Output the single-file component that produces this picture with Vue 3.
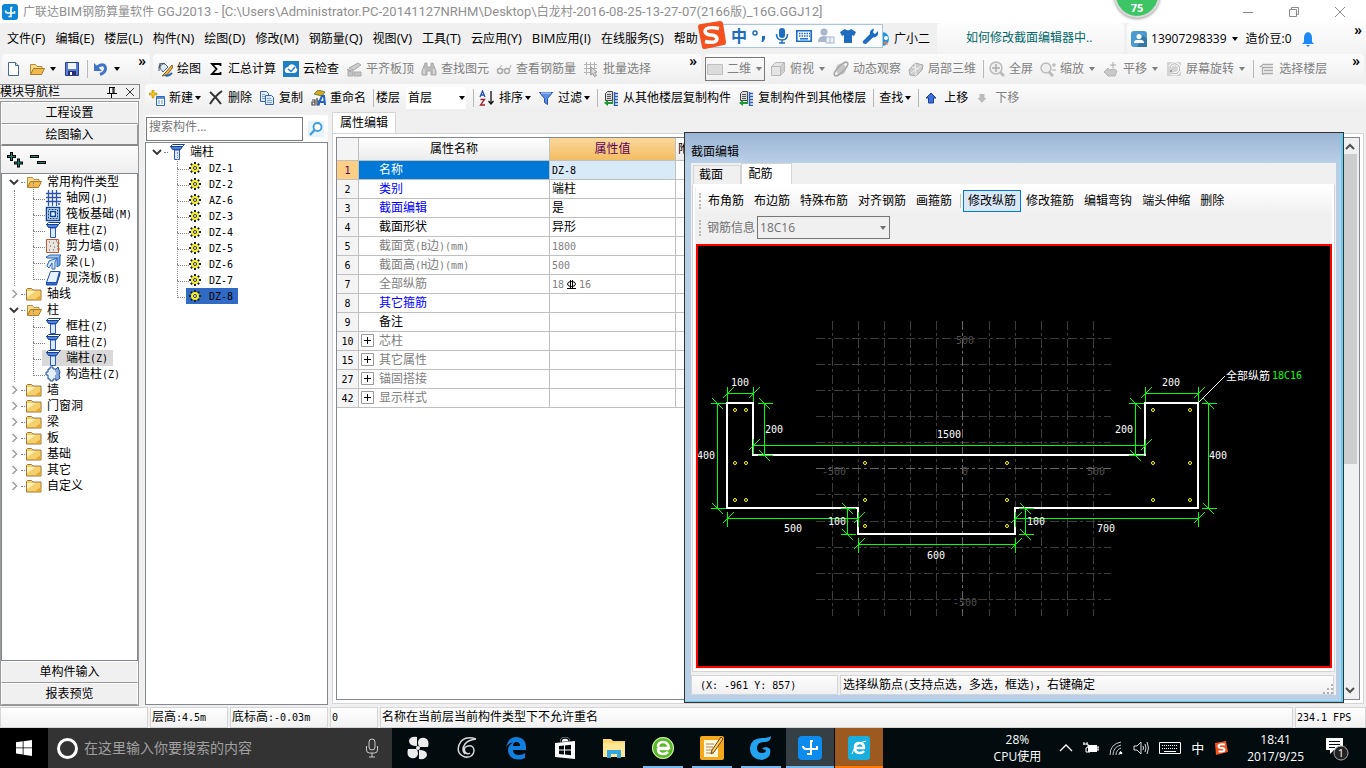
<template>
  <div class="app">
    <header class="titlebar">
      <svg class="icon" viewBox="0 0 16 16" v-html="icons.logo" />
      <h1 class="titlebar__text"><Mixed text="广联达BIM钢筋算量软件 GGJ2013 - [C:\Users\Administrator.PC-20141127NRHM\Desktop\白龙村-2016-08-25-13-27-07(2166版)_16G.GGJ12]" /></h1>
      <div class="titlebar__controls">
        <button v-for="c in ['minimize', 'restore', 'close']" :key="c" type="button" :aria-label="c">
          <svg viewBox="0 0 12 12" v-html="icons[c]" />
        </button>
      </div>
    </header>

    <nav class="menubar">
      <div class="menubar__items">
        <button v-for="m in menus" :key="m" type="button"><Mixed :text="m" /></button>
      </div>
      <button class="menubar__bird" type="button">
        <svg class="icon" viewBox="0 0 16 16" v-html="icons.bird" />广小二
      </button>
      <a class="menubar__tip" href="#">如何修改截面编辑器中..</a>
      <div class="menubar__account">
        <svg class="icon" viewBox="0 0 16 16" v-html="icons.user" />
        <button type="button">13907298339<i class="caret caret--split" /></button>
        <span class="menubar__beans">造价豆:0</span>
        <svg class="icon" viewBox="0 0 16 16" v-html="icons.bell" />
        <span class="more">»</span>
      </div>
    </nav>

    <div class="toolbars">
      <div v-for="(group, g) in topGroups" :key="g" class="toolbar" :class="'toolbar--g' + g">
        <template v-for="(b, i) in group" :key="i">
          <span v-if="b.sep" class="sep" />
          <button
            v-else
            type="button"
            class="tool"
            :class="{ 'tool--boxed': b.boxed }"
            :disabled="b.off"
            :aria-label="b.text || b.icon"
          >
            <svg class="icon" viewBox="0 0 16 16" v-html="icons[b.icon]" />
            <span v-if="b.text">{{ b.text }}</span>
            <i v-if="b.caret" class="caret caret--split" />
          </button>
        </template>
        <span class="more">»</span>
      </div>
    </div>

    <main class="workspace">
      <aside class="modules">
        <div class="modules__head">
          <span>模块导航栏</span>
          <svg class="modules__pin" viewBox="0 0 12 12" v-html="icons.pin" />
          <svg class="modules__pin" viewBox="0 0 12 12" v-html="icons.cross" />
        </div>
        <div class="modules__frame">
          <button class="bar-button" type="button">工程设置</button>
          <button class="bar-button bar-button--on" type="button">绘图输入</button>
          <div class="modules__tools">
            <svg viewBox="0 0 16 16" v-html="icons.expand" />
            <svg viewBox="0 0 16 16" v-html="icons.collapse" />
          </div>
          <ul class="tree modules__tree">
            <li v-for="node in moduleTree" :key="node.text">
              <div class="tree__row">
                <svg class="tree__chevron" viewBox="0 0 10 10" v-html="node.children ? icons.down : icons.right" />
                <i class="tree__dash" />
                <svg class="icon" viewBox="0 0 16 16" v-html="node.children ? icons.folderOpen : icons.folder" />
                <Mixed class="tree__label" :text="node.text" />
              </div>
              <ul v-if="node.children" class="tree__leaves">
                <li v-for="leaf in node.children" :key="leaf.text" class="tree__leaf">
                  <div class="tree__item" :class="{ 'tree__item--on': leaf.on }">
                    <svg class="icon" viewBox="0 0 16 16" v-html="icons[leaf.icon]" />
                    <Mixed :text="leaf.text" />
                  </div>
                </li>
              </ul>
            </li>
          </ul>
          <button class="bar-button" type="button">单构件输入</button>
          <button class="bar-button" type="button">报表预览</button>
        </div>
      </aside>

      <section class="content">
        <div class="toolbar toolbar--edit">
          <template v-for="(b, i) in editTools" :key="i">
            <span v-if="b.sep" class="sep" />
            <div v-else-if="b.floor" class="floor">
              <label for="floor">楼层</label>
              <div class="floor__box">
                <select id="floor"><option>首层</option></select>
                <i class="caret" />
              </div>
            </div>
            <button v-else type="button" class="tool" :disabled="b.off">
              <svg v-if="b.icon" class="icon" viewBox="0 0 16 16" v-html="icons[b.icon]" />
              <span>{{ b.text }}</span>
              <i v-if="b.caret" class="caret" />
            </button>
          </template>
        </div>

        <div class="panes">
          <section class="members">
            <div class="members__search">
              <input type="text" placeholder="搜索构件..." aria-label="搜索构件" />
              <button type="button" aria-label="搜索">
                <svg class="icon" viewBox="0 0 16 16" v-html="icons.search" />
              </button>
            </div>
            <div class="tree members__tree">
              <div class="tree__row">
                <svg class="tree__chevron" viewBox="0 0 10 10" v-html="icons.down" />
                <i class="tree__dash" />
                <svg class="icon" viewBox="0 0 16 16" v-html="icons.column" />
                <span class="tree__label">端柱</span>
              </div>
              <ul class="tree__leaves">
                <li v-for="m in members" :key="m" class="tree__leaf">
                  <div class="tree__item" :class="{ 'tree__item--picked': m === 'DZ-8' }">
                    <svg class="gear" viewBox="0 0 12 12" v-html="icons.gear" />
                    <Mixed :text="m" />
                  </div>
                </li>
              </ul>
            </div>
          </section>

          <section class="props">
            <button class="props__tab" type="button">属性编辑</button>
            <div class="props__page">
              <div class="props__frame">
                <table class="grid">
                  <thead>
                    <tr>
                      <th class="grid__no"></th>
                      <th class="grid__name">属性名称</th>
                      <th class="grid__value grid__value--hot">属性值</th>
                      <th class="grid__extra">附</th>
                    </tr>
                  </thead>
                  <tbody>
                    <tr v-for="row in rows" :key="row.no" :class="'is-' + row.tone">
                      <td class="grid__no"><Mixed :text="row.no" /></td>
                      <td class="grid__name">
                        <svg v-if="row.group" class="plus" viewBox="0 0 13 13" v-html="icons.plusBox" />
                        <Mixed :text="row.name" />
                      </td>
                      <td class="grid__value">
                        <template v-if="row.rebar">
                          <Mixed text="18" /><svg class="rebar" viewBox="0 0 11 11" v-html="icons.rebar" /><Mixed text="16" />
                        </template>
                        <Mixed v-else :text="row.value" />
                      </td>
                      <td></td>
                    </tr>
                  </tbody>
                </table>
                <div class="scroll">
                  <svg viewBox="0 0 14 14"><path d="M3 9l4-4 4 4" fill="none" stroke="#505050" stroke-width="2" /></svg>
                  <i class="scroll__thumb" />
                  <svg viewBox="0 0 14 14"><path d="M3 5l4 4 4-4" fill="none" stroke="#505050" stroke-width="2" /></svg>
                </div>
              </div>
            </div>

            <div class="dialog" role="dialog" aria-labelledby="dialog-title">
              <h2 id="dialog-title" class="dialog__title">截面编辑</h2>
              <div class="dialog__body">
                <div class="dialog__tabs">
                  <button type="button">截面</button>
                  <button type="button" class="on">配筋</button>
                </div>
                <div class="dialog__page">
                  <div class="dialog__tools">
                    <i class="grip" />
                    <template v-for="t in sectionTools" :key="t">
                      <span v-if="t === '|'" class="dialog__sep" />
                      <button v-else type="button" :class="{ on: t === '修改纵筋' }">{{ t }}</button>
                    </template>
                  </div>
                  <div class="dialog__info">
                    <i class="grip" />
                    <label for="rebar-info">钢筋信息</label>
                    <div class="dialog__select">
                      <select id="rebar-info" disabled><option>18C16</option></select>
                      <i class="caret" />
                    </div>
                  </div>
                  <div class="canvas">
                    <svg
                      class="canvas__drawing"
                      viewBox="698 246 632 420"
                      preserveAspectRatio="xMinYMin meet"
                      shape-rendering="crispEdges"
                    >
                      <g stroke="#3c3c3c" stroke-dasharray="9 3 3 3">
                        <path v-for="x in gridX" :key="'x' + x" :d="`M${x}.5 321V616`" />
                        <path v-for="y in gridY" :key="'y' + y" :d="`M816 ${y}.5H1111`" />
                      </g>
                      <path class="axis" d="M962.5 321V616M816 468.5H1111" />
                      <text
                        v-for="l in axisLabels"
                        :key="l.join()"
                        class="num num--dim"
                        :x="l[1]"
                        :y="l[2]"
                      >{{ l[0] }}</text>
                      <path
                        d="M727 403H753V455H1145V403H1198V508H1015V534H858V508H727Z"
                        fill="none"
                        stroke="#fff"
                        stroke-width="2"
                      />
                      <g class="dims">
                        <path v-for="d in dims" :key="d.join()" :d="dimPath(d)" />
                      </g>
                      <text v-for="d in dims" :key="'t' + d.join()" class="num" :x="d[5]" :y="d[6]">{{ d[4] }}</text>
                      <circle
                        v-for="p in bars"
                        :key="p.join()"
                        :cx="p[0]"
                        :cy="p[1]"
                        r="1.5"
                        fill="none"
                        stroke="#ff0"
                        shape-rendering="auto"
                      />
                      <path d="M1199 402l26-26" stroke="#fff" />
                      <text class="note" x="1226" y="380">全部纵筋</text>
                      <text class="num num--green" x="1287" y="379">18C16</text>
                    </svg>
                  </div>
                </div>
                <div class="dialog__status">
                  <div><Mixed text="(X: -961 Y: 857)" /></div>
                  <div>
                    <Mixed text="选择纵筋点(支持点选，多选，框选)，右键确定" />
                    <svg class="sizer" viewBox="0 0 12 12" v-html="icons.sizer" />
                  </div>
                </div>
              </div>
            </div>
          </section>
        </div>
      </section>
    </main>

    <footer class="status">
      <div class="status__blank"></div>
      <div class="status__height"><Mixed text="层高:4.5m" /></div>
      <div class="status__base"><Mixed text="底标高:-0.03m" /></div>
      <div class="status__count"><Mixed text="0" /></div>
      <div class="status__msg">名称在当前层当前构件类型下不允许重名</div>
      <div class="status__fps"><Mixed text="234.1 FPS" /></div>
    </footer>

    <div class="taskbar">
      <button class="taskbar__start" type="button" aria-label="开始">
        <svg viewBox="0 0 16 16" v-html="icons.windows" />
      </button>
      <div class="taskbar__search">
        <i class="taskbar__ring" />
        <input type="text" placeholder="在这里输入你要搜索的内容" aria-label="搜索" />
        <svg viewBox="0 0 16 20" v-html="icons.mic" />
      </div>
      <button
        v-for="a in apps"
        :key="a.icon"
        type="button"
        class="taskbar__app"
        :class="a.state"
        :aria-label="a.icon"
      >
        <svg viewBox="0 0 24 24" v-html="icons[a.icon]" />
      </button>
      <div class="taskbar__cpu"><span>28%</span><span>CPU使用</span></div>
      <div class="taskbar__tray">
        <svg v-for="t in tray" :key="t" viewBox="0 0 16 16" v-html="icons[t]" />
        <svg class="wide" viewBox="0 0 24 16" v-html="icons.keyboard" />
        <span>中</span>
        <svg viewBox="0 0 16 16" v-html="icons.sogou" />
      </div>
      <div class="taskbar__clock"><span>18:41</span><span>2017/9/25</span></div>
      <svg class="taskbar__notice" viewBox="0 0 26 26" v-html="icons.notice" />
    </div>

    <!-- floats above the desktop -->
    <div class="ime">
      <svg class="ime__logo" viewBox="0 0 28 28" v-html="icons.sogouBig" />
      <span>中</span>
      <svg v-for="k in imeKeys" :key="k" viewBox="0 0 18 18" v-html="icons[k]" />
    </div>
    <div class="ball">75</div>
  </div>
</template>

<script setup>
import { h } from 'vue'

// Latin runs get their own font and size, apart from the Chinese ones
const Mixed = (props) =>
  h(
    'span',
    String(props.text)
      .split(/([\x20-\x7e]+)/)
      .filter(Boolean)
      .map((s) => (/^[\x20-\x7e]/.test(s) ? h('span', { class: 'latin' }, s) : s)),
  )
Mixed.props = ['text']

const menus = [
  '文件(F)', '编辑(E)', '楼层(L)', '构件(N)', '绘图(D)', '修改(M)', '钢筋量(Q)',
  '视图(V)', '工具(T)', '云应用(Y)', 'BIM应用(I)', '在线服务(S)', '帮助',
]

const topGroups = [
  [
    { icon: 'file' },
    { icon: 'folderOpen', caret: true },
    { icon: 'save' },
    { sep: true },
    { icon: 'undo', caret: true },
  ],
  [
    { icon: 'draw', text: '绘图' },
    { icon: 'sigma', text: '汇总计算' },
    { icon: 'cloud', text: '云检查' },
    { icon: 'slab', text: '平齐板顶', off: true },
    { icon: 'binocular', text: '查找图元', off: true },
    { icon: 'glasses', text: '查看钢筋量', off: true },
    { icon: 'batch', text: '批量选择', off: true },
  ],
  [
    { icon: 'plane', text: '二维', off: true, caret: true, boxed: true },
    { icon: 'cube', text: '俯视', off: true, caret: true },
    { icon: 'orbit', text: '动态观察', off: true },
    { icon: 'local3d', text: '局部三维', off: true },
    { sep: true },
    { icon: 'full', text: '全屏', off: true },
    { icon: 'zoom', text: '缩放', off: true, caret: true },
    { icon: 'pan', text: '平移', off: true, caret: true },
    { icon: 'rotate', text: '屏幕旋转', off: true, caret: true },
    { sep: true },
    { icon: 'floors', text: '选择楼层', off: true },
  ],
]

const editTools = [
  { icon: 'add', text: '新建', caret: true },
  { icon: 'del', text: '删除' },
  { icon: 'copy', text: '复制' },
  { icon: 'rename', text: '重命名' },
  { sep: true },
  { floor: true },
  { sep: true },
  { icon: 'sort', text: '排序', caret: true },
  { icon: 'filter', text: '过滤', caret: true },
  { sep: true },
  { icon: 'copyFrom', text: '从其他楼层复制构件' },
  { icon: 'copyTo', text: '复制构件到其他楼层' },
  { sep: true },
  { text: '查找', caret: true },
  { sep: true },
  { icon: 'up', text: '上移' },
  { icon: 'downArrow', text: '下移', off: true },
]

const moduleTree = [
  {
    text: '常用构件类型',
    children: [
      { text: '轴网(J)', icon: 'axes' },
      { text: '筏板基础(M)', icon: 'raft' },
      { text: '框柱(Z)', icon: 'column' },
      { text: '剪力墙(Q)', icon: 'wall' },
      { text: '梁(L)', icon: 'beam' },
      { text: '现浇板(B)', icon: 'board' },
    ],
  },
  { text: '轴线' },
  {
    text: '柱',
    children: [
      { text: '框柱(Z)', icon: 'column' },
      { text: '暗柱(Z)', icon: 'column' },
      { text: '端柱(Z)', icon: 'column', on: true },
      { text: '构造柱(Z)', icon: 'tie' },
    ],
  },
  { text: '墙' },
  { text: '门窗洞' },
  { text: '梁' },
  { text: '板' },
  { text: '基础' },
  { text: '其它' },
  { text: '自定义' },
]

const members = ['DZ-1', 'DZ-2', 'AZ-6', 'DZ-3', 'DZ-4', 'DZ-5', 'DZ-6', 'DZ-7', 'DZ-8']

const rows = [
  { no: 1, name: '名称', value: 'DZ-8', tone: 'picked' },
  { no: 2, name: '类别', value: '端柱', tone: 'blue' },
  { no: 3, name: '截面编辑', value: '是', tone: 'blue' },
  { no: 4, name: '截面形状', value: '异形', tone: 'black' },
  { no: 5, name: '截面宽(B边)(mm)', value: '1800', tone: 'gray' },
  { no: 6, name: '截面高(H边)(mm)', value: '500', tone: 'gray' },
  { no: 7, name: '全部纵筋', value: '', rebar: true, tone: 'gray' },
  { no: 8, name: '其它箍筋', value: '', tone: 'blue' },
  { no: 9, name: '备注', value: '', tone: 'black' },
  { no: 10, name: '芯柱', value: '', group: true, tone: 'gray' },
  { no: 15, name: '其它属性', value: '', group: true, tone: 'gray' },
  { no: 27, name: '锚固搭接', value: '', group: true, tone: 'gray' },
  { no: 42, name: '显示样式', value: '', group: true, tone: 'gray' },
]

const sectionTools = [
  '布角筋', '布边筋', '特殊布筋', '对齐钢筋', '画箍筋', '|',
  '修改纵筋', '修改箍筋', '编辑弯钩', '端头伸缩', '删除',
]

const gridX = [832, 858, 884, 910, 936, 989, 1015, 1041, 1067, 1093]
const gridY = [338, 364, 390, 416, 442, 494, 521, 547, 573, 599]
const axisLabels = [
  ['500', 965, 344], ['-500', 834, 475], ['0', 965, 475], ['500', 1096, 475], ['-500', 965, 606],
]

// direction, position of the line, from, to, label, label x, label y
const dims = [
  ['h', 393, 727, 753, '100', 740, 386],
  ['h', 393, 1145, 1198, '200', 1171, 386],
  ['h', 445, 753, 1145, '1500', 949, 438],
  ['h', 518, 727, 858, '500', 793, 532],
  ['h', 518, 1015, 1198, '700', 1106, 532],
  ['h', 544, 858, 1015, '600', 936, 559],
  ['v', 717, 403, 508, '400', 706, 459],
  ['v', 764, 403, 455, '200', 774, 433],
  ['v', 1135, 403, 455, '200', 1124, 433],
  ['v', 1208, 403, 508, '400', 1218, 459],
  ['v', 847, 508, 534, '100', 837, 525],
  ['v', 1025, 508, 534, '100', 1036, 525],
]

function dimPath([dir, at, from, to]) {
  const c = at + 0.5
  return [from, to]
    .map((n) => {
      const e = n + 0.5
      return dir === 'h'
        ? `M${e} ${c - 7}V${c + 8}M${e - 5} ${c + 5}L${e + 6} ${c - 6}`
        : `M${c - 7} ${e}H${c + 8}M${c - 5} ${e - 5}L${c + 6} ${e + 6}`
    })
    .join('') + (dir === 'h' ? `M${from} ${c}H${to}` : `M${c} ${from}V${to}`)
}

const bars = [
  ...[735, 746, 1153, 1190].flatMap((x) => [410, 463, 500].map((y) => [x, y])),
  ...[865, 1007].flatMap((x) => [463, 500, 526].map((y) => [x, y])),
]

const apps = [
  { icon: 'fan' },
  { icon: 'swirl' },
  { icon: 'edge' },
  { icon: 'store' },
  { icon: 'explorer' },
  { icon: 'browser', state: 'running' },
  { icon: 'notes', state: 'running' },
  { icon: 'glodon', state: 'running' },
  { icon: 'ggj', state: 'active' },
  { icon: 'ie', state: 'alert' },
]
const tray = ['chevronUp', 'battery', 'wifi', 'volume']
const imeKeys = ['punct', 'mic2', 'keys', 'person', 'shirt', 'wrench']

const sogouMark =
  '<path d="M2 3l11-2 2 11-12 3z" fill="#f4511e"/><path d="M12 4.500Q6 3.500 5.500 6q0 2 3 2t3 2-6 1.500" fill="none" stroke="#fff" stroke-width="2"/>'

const copyFloor =
  '<path d="M2.500 3.500l2-2h5v9h-7z" fill="#ddd" stroke="#444"/><path d="M4 4.500h4M4 6.500h4M4 8.500h4" stroke="#555"/><path d="M11.500 2v14M11 3.500h4M11 6.500h4M11 9.500h4M11 12.500h4M11 15.500h4" stroke="#2b5cb8" stroke-width="1.400"/><path d="M1 13l4-3v2h4v-2h1v4H5v2z" fill="#1a9a30"/>'

const icons = {
  logo: '<rect width="16" height="16" rx="3" fill="#0d86d8"/><path d="M10.500 3.500H9v9H6.500M3.500 6.500q0 2.500 2.500 2.500h6.500V7" fill="none" stroke="#fff" stroke-width="1.600"/>',
  minimize: '<path d="M1 6.500h10" stroke="#8a8a8a"/>',
  restore: '<path d="M1.500 3.500h7v7h-7zM3.500 3V1.500h7v7H9" fill="none" stroke="#8a8a8a"/>',
  close: '<path d="M1 1l10 10M11 1L1 11" stroke="#8a8a8a"/>',
  bird: '<circle cx="8" cy="8" r="7" fill="#2196e0"/><circle cx="12" cy="7" r="2" fill="#fff"/><path d="M9 12l5 2-2-4z" fill="#e74"/>',
  user: '<rect width="16" height="16" rx="3" fill="#4c9bd0"/><path d="M8 12l4-8 4 4v8H6z" fill="#3479a8"/><circle cx="8" cy="5.500" r="2.500" fill="#fff"/><path d="M3 12q0-3 3-3h4q3 0 3 3z" fill="#fff"/>',
  bell: '<path d="M8 1q4 1 4 6v4l2 2H2l2-2V7q0-5 4-6z" fill="#1e88f5"/><path d="M6 14h4l-2 2z" fill="#1e88f5"/>',
  file: '<path d="M2.500 1.500h7l3 3v10h-10z" fill="#fff" stroke="#4a6a94"/><path d="M9.500 1.500v3h3" fill="#cfe0f4" stroke="#4a6a94"/>',
  folderOpen: '<path d="M1.500 13V3.500h5l1.500 2h5V8" fill="#f9dc8a" stroke="#b58a3a"/><path d="M1.500 13.500L4.500 7.500h11l-3 6z" fill="#f2b84a" stroke="#a87a2c"/>',
  folder: '<path d="M.5 3.500l1-1h4l1.500 1.500h8v10H.500z" fill="#f7d06c" stroke="#9a7a3c"/><path d="M1 5h9L1 11z" fill="#fff0b8"/><path d="M14.500 9v4.500H9z" fill="#eba92c"/>',
  save: '<path d="M1.500 1.500h13v13h-13z" fill="#5b7fd6" stroke="#27408f"/><path d="M4 2h8v6H4z" fill="#f2f4ff"/><path d="M4 10h8v4H4z" fill="#27306f"/><path d="M6 11h2v3H6z" fill="#fff"/>',
  undo: '<path d="M4 6q8-5 8.500 1.500 0 4-5.500 6" fill="none" stroke="#3f74c8" stroke-width="3"/><path d="M1 2v8h8z" fill="#3f74c8"/>',
  draw: '<path d="M2 6l5-4 4 4-5 5z" fill="#dfe7f0" stroke="#4a6280"/><path d="M3 2v5M8 3Q1 0 2 10" fill="none" stroke="#456"/><path d="M15 4l-6 7-4 4 5-1 6-8z" fill="#edb541" stroke="#865f20"/><path d="M8 14q3 2 7-2" stroke="#2c66b8" stroke-width="2" fill="none"/>',
  sigma: '<path d="M12.500 5V3H4l4.500 5L4 13h8.500v-2" fill="none" stroke="#000" stroke-width="1.800"/>',
  cloud: '<rect width="16" height="16" fill="#1e7fc4"/><path d="M4 12q-3-1-2-4 1-2 3-2 2-4 6-2 2 1 2 3 2 1 1 3-1 2-3 2z" fill="#fff"/><path d="M5 8l3 2.500L12 6" fill="none" stroke="#1e7fc4" stroke-width="1.500"/>',
  slab: '<path d="M3 7l9-5 3 2-7 5z" fill="#ccc" stroke="#aaa"/><path d="M2 9h5v6H2zM8 11h7v4H8z" fill="#c4c4c4" stroke="#aaa"/><path d="M1 8l4 3" stroke="#999"/>',
  binocular: '<path d="M3 5l1-3h2v4h4V2h2l1 3 2 5v4h-5v-4H6v4H1v-4z" fill="#bbb" stroke="#aaa"/><path d="M3 8v5M13 8v5" stroke="#eee"/>',
  glasses: '<circle cx="4" cy="10" r="2.500" fill="none" stroke="#aaa" stroke-width="1.500"/><circle cx="11" cy="10" r="2.500" fill="none" stroke="#aaa" stroke-width="1.500"/><path d="M2 9l4-5M13 9l2-5M6.500 9q1-1 2 0" fill="none" stroke="#aaa"/>',
  batch: '<path d="M1 3.500h13M1 7.500h13M1 11.500h8M3.500 1v13M7.500 1v13M11.500 1v7" stroke="#b4b4b4"/><path d="M8 6l6 5-2.500.500 2 3-2 1-1.500-3-2 1.500z" fill="#ddd" stroke="#999"/>',
  plane: '<path d="M.5 3.500h15v10H.5z" fill="#dcdcdc" stroke="#c0c0c0"/>',
  cube: '<path d="M1.500 5.500l4-4h9v9l-4 4h-9z" fill="#e4e4e4" stroke="#b8b8b8"/><path d="M1.500 5.500h9v9M10.500 5.500l4-4" fill="none" stroke="#b8b8b8"/><path d="M11 6l3-3v7l-3 3z" fill="#ccc"/>',
  orbit: '<ellipse cx="8" cy="8" rx="5" ry="5.500" fill="#c6c6c6"/><ellipse cx="8" cy="8" rx="9" ry="3" transform="rotate(-45 8 8)" fill="none" stroke="#aaa" stroke-width="1.500"/>',
  local3d: '<path d="M1 9l6-7 8 2-1 5-6 6-6-1z" fill="#ccc" stroke="#aaa"/><path d="M4 6l7 2M7 2l1 13M3 12l10-7" stroke="#f0f0f0"/>',
  full: '<circle cx="7" cy="7" r="6" fill="#eee" stroke="#bbb" stroke-width="1.500"/><path d="M7 3v8M3 7h8" stroke="#aaa" stroke-width="1.500"/><path d="M11 11l4 4" stroke="#bbb" stroke-width="3"/>',
  zoom: '<circle cx="6" cy="7" r="5" fill="#eee" stroke="#bbb" stroke-width="1.500"/><path d="M9 11l4 4" stroke="#bbb" stroke-width="3"/><path d="M12 4h4M14 2v4M12 9h4" stroke="#aaa"/>',
  pan: '<path d="M10 1v6M7 4h6" stroke="#aaa"/><path d="M3 9l2-2 1 2 5-1 3 2-2 5H5l-4-4z" fill="#c8c8c8" stroke="#b4b4b4"/>',
  rotate: '<path d="M1 1h14v14H1z" fill="#d4d4d4"/><path d="M4 6a5 5 0 1 1 2 6" fill="none" stroke="#fff" stroke-width="3"/><path d="M4 6a5 5 0 1 1 2 6" fill="none" stroke="#aaa"/><circle cx="5" cy="10" r="1" fill="#888"/>',
  floors: '<path d="M5 3.500h9M3 6.500h11M5 9.500h9M5 12.500h9M3.500 6v7H5M1 6l4-3" fill="none" stroke="#aaa" stroke-width="1.300"/>',
  add: '<path d="M3 0h2v3h3v2H5v3H3V5H0V3h3z" fill="#f5c518" stroke="#a67c00" stroke-width=".5"/><path d="M7.500 6.500h8v9h-8z" fill="#fff" stroke="#2c66b8"/><path d="M8 7h7v2H8z" fill="#5a8fdc"/><path d="M9 11h2M12 11h2M9 13h2M12 13h2" stroke="#5a8fdc"/>',
  del: '<path d="M2 2q6 5 11 12M14 1Q7 6 2 14" fill="none" stroke="#333" stroke-width="2"/>',
  copy: '<path d="M1.500 1.500h6l2 2v8h-8z" fill="#e4eefb" stroke="#3a62a8"/><path d="M6.500 5.500h6l2 2v7h-8z" fill="#dceafb" stroke="#3a62a8"/><path d="M8 8.500h4M8 10.500h5M8 12.500h5M3 4.500h3M3 6.500h3M3 8.500h3" stroke="#7da2d8"/>',
  rename: '<path d="M4 4l4-4 7 2-3 4z" fill="#d9a520" stroke="#6a8830"/><path d="M2 10h3v5H2v-3h3M7 8v7h2v-4H7" fill="none" stroke="#444" stroke-width="1.200"/><path d="M8 15l4-9h2l1 9M10 12h5" fill="none" stroke="#1e5fc0" stroke-width="2"/>',
  sort: '<path d="M1 7l2.500-6L6 7M2 5h3" fill="none" stroke="#2452b0" stroke-width="1.300"/><path d="M1.500 9.500h4L1.500 15h4.500" fill="none" stroke="#a02030" stroke-width="1.300"/><path d="M12 1v12M9.500 11l2.500 3 2.500-3" fill="none" stroke="#111" stroke-width="1.300"/>',
  filter: '<path d="M1.500 2.500h13l-5 6v6l-3-2v-4z" fill="#5a90e8" stroke="#2450a8"/><path d="M3 3h10" stroke="#cfe0ff"/>',
  copyFrom: copyFloor,
  copyTo: copyFloor,
  up: '<path d="M7 3l5 5H9.500v5h-5V8H2z" fill="#3c6fd8" stroke="#1c3f98"/>',
  downArrow: '<path d="M7 13L2.500 8h2V4h5v4h2z" fill="#bbb"/>',
  down: '<path d="M1 3l4 4 4-4" fill="none" stroke="#333" stroke-width="1.800"/>',
  right: '<path d="M3.500 1l4 4-4 4" fill="none" stroke="#a0a0a0" stroke-width="1.600"/>',
  pin: '<path d="M3.500 2v5M8 2v5M7 2v5M3 1.500h6M1 7.500h10M5.500 8v4" fill="none" stroke="#000"/>',
  cross: '<path d="M2 2l8 8M10 2l-8 8" stroke="#333"/>',
  expand: '<path d="M4.500 0v9M0 4.500h9M11.500 6.500v9M7 11h9" stroke="#000" stroke-width="3"/><path d="M4.500 1v7M1 4.500h7M11.500 7.500v7M8 11h7" stroke="#0a8a80"/>',
  collapse: '<path d="M0 4.500h9M7 10.500h9" stroke="#000" stroke-width="3"/><path d="M1 4.500h7M8 10.500h7" stroke="#0a8a80"/>',
  axes: '<path d="M1 3.500h15M1 7.500h15M1 11.500h15M3.500 0v16M7.500 0v16M11.500 0v16" stroke="#2a54b0" stroke-width="1.300"/><circle cx="14" cy="14" r="1" fill="#2a54b0"/>',
  raft: '<path d="M1.500 1.500h13v13h-13z" fill="#e6f0ff" stroke="#0d4690" stroke-width="1.500"/><path d="M5.500 5.500h5v5h-5z" fill="none" stroke="#0d4690" stroke-width="1.500"/><path d="M3.500 3.500h9v9h-9z" fill="none" stroke="#0d4690" stroke-dasharray="2 1"/>',
  column: '<path d="M1.500 2.500l2-2h12l-2 2z" fill="#fff" stroke="#1a3f8a"/><path d="M1.500 2.500h12l-2 3h-8z" fill="#4d86dc" stroke="#1a3f8a"/><path d="M5.500 6h5v9.500h-5z" fill="#dbe9ff" stroke="#2a56b4"/>',
  wall: '<path d="M1.500 1.500h12v13h-12z" fill="#e8e4e0" stroke="#c05a30"/><path d="M4 4h1M8 5h1M11 3h1M5 8h1M9 9h1M12 8h1M4 12h1M8 12h1" stroke="#555"/><path d="M12 5h3M12 11h3" stroke="#c05a30"/>',
  beam: '<path d="M1 3l4-2h11l-3 3H2z" fill="#a9ccf4" stroke="#2a62b4"/><path d="M4 7l8-3-2 4v7H7V9l-3 5-2-2z" fill="#d6e8ff" stroke="#2a62b4"/><path d="M12 4v9l3-2V2" fill="#6fa4e4" stroke="#2a62b4"/>',
  board: '<path d="M5.500 1.500h9l-3 11h-10z" fill="#e6f1ff" stroke="#1d4fa8"/><path d="M1.500 12.500v2.500h10l3.500-11V1.500l-3 11z" fill="#2c6cd0" stroke="#1d4fa8"/>',
  tie: '<path d="M3 3h2V1h3v2h3v3h2v3h-2v4H8v2H5v-2H3V9H1V6h2z" fill="#e4eeff" stroke="#1f4a92"/><path d="M11 3l2-2 1 3 1 2-1 3 1 3-4 3v-2" fill="#86a8e0" stroke="#1f4a92"/>',
  gear: '<path d="M6 0v12M0 6h12M1.800 1.800l8.400 8.400M10.200 1.800l-8.400 8.400" stroke="#222" stroke-width="2"/><circle cx="6" cy="6" r="4" fill="#f4ee30"/><circle cx="6" cy="6" r="1.500" fill="#fff" stroke="#333"/>',
  search: '<rect width="16" height="16" fill="#e8f4fc"/><circle cx="9.500" cy="6" r="4" fill="#fff" stroke="#3d9be0" stroke-width="1.800"/><path d="M6.500 9L2 14" stroke="#3d9be0" stroke-width="2.200"/>',
  plusBox: '<path d="M.5.500h12v12H.5z" fill="#fff" stroke="#999"/><path d="M3 6.500h7M6.500 3v7" stroke="#000"/>',
  rebar: '<ellipse cx="5.500" cy="5" rx="4" ry="2.500" fill="none" stroke="#000"/><path d="M4.500 1v8M6.500 1v8M1 9.500h9" stroke="#000"/>',
  sizer: '<path d="M10 2h2v2h-2zM6 6h2v2H6zM10 6h2v2h-2zM2 10h2v2H2zM6 10h2v2H6zM10 10h2v2h-2z" fill="#b0b0b0"/>',
  windows: '<path d="M0 2.300l6.700-1v6.200H0zM7.500 1.200L16 0v7.500H7.500zM0 8.300h6.700v6.200L0 13.600zM7.500 8.300H16V16l-8.500-1.300z" fill="#fff"/>',
  mic: '<rect x="5" y="1" width="6" height="11" rx="3" fill="none" stroke="#ccc"/><path d="M2.500 8v4q0 3 3 3h5q3 0 3-3V8M8 15v4M5 19h6" fill="none" stroke="#ccc"/>',
  fan: '<path d="M11 10V1Q4 0 3 5q0 5 8 5z" fill="#ececec"/><path d="M14 11h8q2-7-3-9-6-1-7 4 0 4 2 5z" fill="#ececec"/><path d="M13 14v9q7 1 8-4 0-5-8-5z" fill="#ececec"/><path d="M10 13H2q-2 7 3 9 6 1 7-4 0-4-2-5z" fill="#ececec"/><circle cx="12" cy="12" r="2" fill="#ececec"/>',
  swirl: '<path d="M21 3Q8-1 4 9q-3 9 6 12 8 1 9-6 0-6-6-5-5 1-3 6 2 3 5 1M21 3q-8 1-11 5-4 6 0 10" fill="none" stroke="#d8d8d8" stroke-width="1.500"/>',
  edge: '<path d="M2 11Q4 1 13 1q9 1 9 10v3H9q0 5 6 5 4 0 6-2v5q-3 1.500-7 1.500-9 0-10-9 0-5 5-8-4 0-7 4.500zM9 10h7q0-4-3.500-4T9 10z" fill="#0f7fe0"/>',
  store: '<path d="M2 7l20-2v18L2 21zM7 6q0-5 5-5t5 4" fill="#fff"/><path d="M8 6q0-4 4-4t4 3" fill="none" stroke="#02080b" stroke-width="1.500"/><path d="M6 10l5-.5v4H6zM12 9.400l6-.6v4.700h-6zM6 14.500h5v4L6 18zM12 14.500h6v4.700l-6-.6z" fill="#02080b"/>',
  explorer: '<path d="M1 3h8l2 2h12v16H1z" fill="#fbd869"/><path d="M1 7h22v14H1z" fill="#ffe694"/><path d="M5 22v-8h14v8h-4v-4H9v4z" fill="#34a7e0"/>',
  browser: '<circle cx="12" cy="12" r="11" fill="#5cb828"/><circle cx="12" cy="12" r="10.500" fill="none" stroke="#dff3c8"/><path d="M18 13H7q0 5 5 5 3 0 5-2M7 11q0-5 5-5 5 0 6 6H7" fill="none" stroke="#fff" stroke-width="2.500"/>',
  notes: '<rect x="0" y="0" width="24" height="24" rx="2" fill="#f6a81c"/><path d="M4 4h14v17H4z" fill="#fff6dc"/><path d="M6 8h8M6 11h7M6 14h6M6 17h8" stroke="#b08850"/><path d="M21 1l2 2-9 13-3 2 1-4z" fill="#f8d060" stroke="#704010"/>',
  glodon: '<path d="M22 0q0 6-7 6-7 0-7 6 0 5 5 5 4 0 4-3l-4-1q4-4 8 0 2 9-8 11Q1 23 1 12 2 2 13 2q6 0 9-2z" fill="#23a2ee"/>',
  ggj: '<rect width="24" height="24" rx="4" fill="#0d8cf0"/><path d="M15 5h-2v13h-4M5 10q0 3 4 3h10v-3" fill="none" stroke="#fff" stroke-width="2"/>',
  ie: '<rect x="1" width="22" height="24" rx="3" fill="#18aede"/><path d="M18 12H8q0 5 4.500 5 3 0 4.500-2M8 11q0-4 4.500-4t4.500 5" fill="none" stroke="#fff" stroke-width="2.500"/><path d="M5 18Q8 7 19 5" fill="none" stroke="#fff"/>',
  chevronUp: '<path d="M2 11l6-6 6 6" fill="none" stroke="#fff" stroke-width="1.300"/>',
  battery: '<path d="M5 5h9v7H5z" fill="#fff"/><path d="M14 7h2v3h-2zM0 4h5v3L3 8v4h4M1 2v3M4 2v3" fill="none" stroke="#fff"/>',
  wifi: '<path d="M2 15Q2 4 13 2M5 15q0-8 8-10M8 15q0-5 5-7M11 15q0-3 2-4" fill="none" stroke="#c8c8c8"/><circle cx="13" cy="13" r="1.300" fill="#fff"/>',
  volume: '<path d="M1 6h3l4-4v12l-4-4H1zM10 6q1 2 0 4M12 4q2 4 0 8M14 2q3 6 0 12" fill="none" stroke="#ddd"/>',
  keyboard: '<path d="M1.500 2.500h21v11h-21z" fill="none" stroke="#fff"/><path d="M4 5.500h16M4 8.500h16" stroke="#fff" stroke-dasharray="1 1"/><path d="M6 11.500h12" stroke="#fff"/>',
  sogou: sogouMark,
  notice: '<path d="M3 3h17v12h-9l-4 4v-4H3z" fill="#fff"/><path d="M6 6.500h11M6 9.500h11M6 12.500h6" stroke="#02080b"/><circle cx="18" cy="18" r="7" fill="#222" stroke="#aaa"/><text x="18" y="22" text-anchor="middle" font-family="Open Sans, sans-serif" font-size="11" fill="#fff">1</text>',
  sogouBig: '<path d="M3 3l19-3q2 0 3 2l3 19q0 3-2 3L7 28q-3 0-3-2L0 6q0-3 3-3z" fill="#f4511e"/><path d="M21 7.500Q8 5 7 10q0 3.500 6 4t6 4Q18 23 7 20.500" fill="none" stroke="#fff" stroke-width="3.500"/>',
  punct: '<circle cx="4" cy="6" r="2" fill="none" stroke="#1d6cc0" stroke-width="1.500"/><path d="M11 9h3v3l-2 3h-1.500l.5-3z" fill="#1d6cc0"/>',
  mic2: '<rect x="6" y="1" width="6" height="10" rx="3" fill="#1d6cc0"/><path d="M3.500 7q0 6 5.500 6t5.500-6M9 13v3M6 16h6" fill="none" stroke="#1d6cc0" stroke-width="1.500"/>',
  keys: '<path d="M1.800 3.800h14.400v10.400H1.800z" fill="none" stroke="#1d6cc0" stroke-width="1.600"/><path d="M4 6.500h11M4 9h11" stroke="#1d6cc0" stroke-width="1.500" stroke-dasharray="1.500 1"/><path d="M5 11.800h8" stroke="#1d6cc0" stroke-width="1.500"/>',
  person: '<circle cx="7" cy="5" r="3.500" fill="#a9b6cc"/><path d="M1 15q0-6 6-6 4 0 5 3v3z" fill="#a9b6cc"/><path d="M9 10h8v6H9z" fill="#eef2f8" stroke="#a9b6cc"/><path d="M13 10v6" stroke="#a9b6cc"/>',
  shirt: '<path d="M6 2q3 2.500 6 0l5 3-2 4-2-1v8H5V8L3 9 1 5z" fill="#1d6cc0"/>',
  wrench: '<path d="M2 14L9 7q-1-4 4-5.500l-1 4 2 1.500 3-3q1 6-5 6.500L5 17q-4 0-3-3z" fill="#1d6cc0"/>',
}
</script>

<style>
body {
  overflow: hidden;
}
</style>

<style scoped>
.app {
  --ui: 'Open Sans', 'Noto Sans CJK SC', sans-serif;
  --face: #f0f0f0;
  --line: #d5d5d5;
  position: relative;
  display: flex;
  flex-direction: column;
  height: 100vh;
  font: 12px/16px var(--ui);
  color: #000;
  background: var(--face);
  white-space: nowrap;
}

.app * {
  box-sizing: border-box;
}

.app :deep(.latin) {
  font: 10px/14px 'DejaVu Sans Mono', monospace;
}

button,
input,
select {
  padding: 0;
  font: inherit;
  color: inherit;
  background: none;
  border: 0;
  border-radius: 0;
  appearance: none;
}

button,
a {
  white-space: nowrap;
}

svg {
  display: block;
  flex: none;
}

ul {
  margin: 0;
  padding: 0;
  list-style: none;
}

.icon {
  width: 16px;
  height: 16px;
}

.caret {
  flex: none;
  width: 0;
  height: 0;
  margin-left: 2px;
  border: 3px solid transparent;
  border-top: 4px solid currentColor;
  border-bottom: 0;
}

.caret--split {
  margin-left: 5px;
}

.more {
  align-self: flex-start;
  margin-left: auto;
  font-size: 14px;
  font-weight: 600;
  line-height: 14px;
}

/* title bar */
.titlebar {
  display: flex;
  align-items: center;
  gap: 5px;
  height: 23px;
  padding: 0 20px 0 2px;
  background: #fff;
}

.titlebar__text {
  margin: 0;
  font-size: 12px;
  font-weight: 400;
  color: #8f8f8f;
}

.titlebar__text :deep(.latin) {
  font: 13px/16px Roboto, sans-serif;
}

.titlebar__controls {
  display: flex;
  gap: 34px;
  margin-left: auto;
}

.titlebar__controls svg {
  width: 12px;
  height: 12px;
}

/* menu */
.menubar {
  display: flex;
  align-items: center;
  height: 31px;
  padding-left: 7px;
}

.menubar__items {
  display: flex;
  gap: 10px;
  width: 867px;
  overflow: hidden;
}

.menubar__items :deep(.latin) {
  font: 13px/16px var(--ui);
}

.menubar__bird {
  display: flex;
  gap: 4px;
  align-items: center;
}

.menubar__tip {
  align-self: stretch;
  width: 187px;
  margin-left: 7px;
  padding-left: 29px;
  line-height: 30px;
  color: #006868;
  text-decoration: none;
  background: linear-gradient(#fdfdfd, #f3f3f3);
  border-radius: 4px;
}

.menubar__account {
  display: flex;
  flex: 1;
  align-items: center;
  align-self: stretch;
  gap: 4px;
  margin-left: 3px;
  padding: 0 4px;
  background: linear-gradient(#fdfdfd, #f3f3f3);
  border-radius: 4px 0 0 4px;
}

.menubar__account button {
  display: flex;
  align-items: center;
}

.menubar__beans {
  margin: 0 4px;
}

/* toolbars */
.toolbars {
  display: flex;
  gap: 3px;
  height: 30px;
  padding: 0 2px;
}

.toolbar {
  display: flex;
  align-items: center;
  gap: 7px;
  padding: 0 4px;
  background: linear-gradient(#fcfcfc, #eee);
  border-radius: 4px;
}

.toolbar--g0 {
  width: 148px;
}

.toolbar--g1 {
  width: 548px;
}

.toolbar--g2 {
  flex: 1;
  padding-left: 1px;
}

.toolbar--edit {
  flex: none;
  height: 28px;
}

.tool {
  display: flex;
  align-items: center;
  gap: 4px;
}

.tool .caret {
  margin-left: -2px;
}

.tool .caret--split {
  margin: 0 1px;
}

.tool:disabled {
  color: #808080;
}

.tool--boxed {
  height: 24px;
  margin-right: -2px;
  padding: 0 1px;
  border: 1px solid #777;
}

.sep {
  width: 1px;
  height: 18px;
  margin-right: -2px;
  background: #b8b8b8;
}

.floor {
  display: flex;
  align-items: center;
  gap: 6px;
  margin-left: -3px;
}

.floor__box {
  display: flex;
  align-items: center;
  width: 60px;
  height: 22px;
  padding: 0 1px 0 2px;
  background: #fff;
}

.floor__box select {
  flex: 1;
  min-width: 0;
}

/* module navigator */
.workspace {
  display: flex;
  flex: 1;
  min-height: 0;
}

.modules {
  display: flex;
  flex-direction: column;
  width: 140px;
  margin-right: 5px;
}

.modules__head {
  display: flex;
  align-items: center;
  gap: 6px;
  height: 15px;
  padding-right: 3px;
  border: 1px solid #888;
  border-left: 0;
}

.modules__head span {
  flex: 1;
}

.modules__pin {
  width: 12px;
  height: 12px;
}

.modules__frame {
  display: flex;
  flex: 1;
  flex-direction: column;
  min-height: 0;
  margin: 2px 1px 1px 0;
  border: 1px solid #999;
}

.bar-button {
  flex: none;
  height: 22px;
  background: var(--face);
  border: 1px solid #fff;
  border-bottom-color: #999;
}

.bar-button--on {
  border-right-color: #999;
  border-bottom: 2px solid #888;
}

.modules__tools {
  display: flex;
  align-items: center;
  gap: 7px;
  height: 27px;
  padding-left: 6px;
  background: linear-gradient(#fcfcfc, #eee);
}

.modules__tools svg {
  width: 16px;
  height: 16px;
}

.tree {
  background: #fff;
  border: 1px solid #828790;
}

.modules__tree {
  flex: 1;
}

.tree__row {
  display: flex;
  align-items: center;
  height: 16px;
  padding-left: 7px;
}

.tree__chevron {
  width: 10px;
  height: 10px;
}

.tree__dash {
  width: 4px;
  margin: 0 1px 0 2px;
  border-top: 1px dotted #888;
}

.tree__label {
  margin-left: 5px;
}

.tree__leaves {
  margin-left: 12px;
  padding-left: 18px;
  border-left: 1px dotted #888;
}

.tree__leaf {
  position: relative;
  height: 16px;
  padding-left: 9px;
}

.tree__leaf::before {
  position: absolute;
  top: -8px;
  left: 0;
  width: 11px;
  height: 17px;
  content: '';
  border: dotted #888;
  border-width: 0 0 1px 1px;
}

.tree__item {
  position: relative;
  display: inline-flex;
  align-items: center;
  gap: 5px;
  height: 16px;
  padding: 0 5px 0 3px;
}

.tree__item--on {
  background: #d9d9d9;
}

/* member list */
.content {
  display: flex;
  flex: 1;
  flex-direction: column;
  min-width: 0;
}

.panes {
  display: flex;
  flex: 1;
  min-height: 0;
}

.members {
  display: flex;
  flex-direction: column;
  width: 183px;
  margin: 3px 4px 2px 0;
  background: #fff;
}

.members__search {
  display: flex;
  align-items: center;
  gap: 5px;
  height: 27px;
  padding-left: 1px;
}

.members__search input {
  flex: 1;
  min-width: 0;
  height: 24px;
  padding: 0 2px 4px;
  background: #fff;
  border: 1px solid #7a7a7a;
}

.members__search button {
  width: 20px;
}

.members__search input::placeholder {
  color: #757575;
}

.members__tree {
  flex: 1;
  padding-top: 1px;
}

.members__tree .tree__row {
  padding-left: 6px;
}

.members__tree .tree__leaves {
  margin-left: 14px;
  padding-left: 17px;
  border-left: 0;
}

.members__tree .tree__item {
  gap: 8px;
}

.gear {
  width: 12px;
  height: 12px;
}

.tree__item--picked {
  background: #316ac5;
}

/* property editor */
.props {
  position: relative;
  display: flex;
  flex: 1;
  flex-direction: column;
  min-width: 0;
}

.props__tab {
  align-self: flex-start;
  height: 21px;
  padding: 0 7px;
  background: #fff;
  border: 1px solid var(--line);
  border-bottom: 0;
}

.props__page {
  flex: 1;
  min-height: 0;
  margin: 0 2px 3px 0;
  padding: 3px;
  background: #fff;
  border: 1px solid var(--line);
}

.props__frame {
  display: flex;
  height: 100%;
  border: 1px solid #828790;
}

.grid {
  flex: 1;
  align-self: flex-start;
  table-layout: fixed;
  border-spacing: 0;
}

.grid th,
.grid td {
  height: 19px;
  padding: 0;
  line-height: 16px;
  border: solid #c0c0c0;
  border-width: 0 1px 1px 0;
}

.grid th {
  height: 23px;
  font-weight: 400;
  background: linear-gradient(#fff, #ececec);
}

.grid .grid__no {
  width: 22px;
  text-align: center;
  background: #f4f4f4;
}

.grid__name {
  width: 191px;
}

.grid td.grid__name {
  position: relative;
  padding-left: 20px;
}

.grid__value {
  width: 126px;
}

.grid td.grid__value {
  padding-left: 2px;
}

.grid th.grid__value--hot {
  color: #5c0060;
  background: linear-gradient(#fad89c, #f3bd60);
}

.grid th.grid__extra {
  padding-left: 2px;
  text-align: left;
}

.plus {
  position: absolute;
  top: 2px;
  left: 2px;
  width: 13px;
  height: 13px;
}

.rebar {
  display: inline-block;
  width: 11px;
  height: 11px;
  margin: 0 2px;
  vertical-align: -2px;
}

.is-blue .grid__name {
  color: #00f;
}

.is-gray .grid__name,
.is-gray .grid__value {
  color: #808080;
}

.grid .is-picked .grid__no {
  color: #5c0060;
  background: #fdcf85;
}

.is-picked .grid__name {
  color: #fff;
  background: #0078d7;
}

.is-picked .grid__value {
  background: #d8e9f8;
}

.scroll {
  display: flex;
  flex-direction: column;
  justify-content: space-between;
  width: 17px;
  padding: 2px 1px;
  background: var(--face);
}

.scroll svg {
  width: 14px;
  height: 14px;
}

.scroll__thumb {
  width: 14px;
  height: 310px;
  margin-bottom: auto;
  background: #cdcdcd;
}

/* section editor window */
.dialog {
  position: absolute;
  inset: 20px 22px 4px 352px;
  display: flex;
  flex-direction: column;
  padding: 0 7px 7px 6px;
  background: #b9cfe8;
  border: 1px solid #333;
  box-shadow: inset -2px -1px #62cdf0;
}

.dialog__title {
  height: 30px;
  margin: 0 -5px 0 -6px;
  padding-left: 6px;
  font-size: 12px;
  font-weight: 400;
  line-height: 37px;
  background: linear-gradient(#9ab5d3, #b9cfe8);
}

.dialog__body {
  display: flex;
  flex: 1;
  flex-direction: column;
  min-height: 0;
  background: var(--face);
}

.dialog__tabs {
  display: flex;
  align-items: flex-end;
  height: 21px;
  padding-left: 2px;
}

.dialog__tabs button {
  width: 48px;
  height: 19px;
  padding-right: 12px;
  border: 1px solid var(--line);
  border-bottom: 0;
}

.dialog__tabs .on {
  width: 51px;
  height: 21px;
  background: #fff;
}

.dialog__page {
  display: flex;
  flex: 1;
  flex-direction: column;
  min-height: 0;
  margin: 0 1px 3px;
  padding: 2px 2px 3px 3px;
  border: 1px solid var(--line);
  border-top-color: #fff;
  box-shadow: inset 0 0 0 2px #fff;
}

.dialog__tools {
  display: flex;
  align-items: center;
  gap: 1px;
  height: 27px;
  background: linear-gradient(#fff, var(--face));
}

.grip {
  width: 4px;
  height: 16px;
  margin: 0 1px 0 3px;
  border-left: 2px dotted #b8b8b8;
}

.dialog__tools button {
  height: 22px;
  padding: 0 4px;
  border: 1px solid transparent;
}

.dialog__tools button:first-of-type {
  margin-left: -2px;
}

.dialog__tools button + button {
  margin-left: -1px;
}

.dialog__tools .on {
  background: #d8e8f6;
  border-color: #0078d7;
}

.dialog__sep {
  width: 1px;
  height: 14px;
  margin: 0 1px 0 2px;
  background: #c4c4c4;
}

.dialog__info {
  display: flex;
  align-items: center;
  height: 27px;
  color: #707070;
}

.dialog__info label {
  margin: 0 2px 0 3px;
}

.dialog__select {
  display: flex;
  align-items: center;
  width: 133px;
  height: 23px;
  padding: 0 3px 0 2px;
  border: 1px solid #777;
}

.dialog__select select {
  flex: 1;
  min-width: 0;
  font-size: 12px;
  opacity: 1;
}

.canvas {
  flex: 1;
  min-height: 0;
  margin-top: 3px;
  background: #000;
  border: 2px solid #f00;
}

.canvas__drawing {
  width: 100%;
  height: 100%;
}

.axis {
  stroke: #666;
  stroke-dasharray: 9 3 3 3;
}

.dims path {
  fill: none;
  stroke: #0f0;
}

.num {
  font: 10px 'DejaVu Sans Mono', monospace;
  text-anchor: middle;
  fill: #fff;
}

.num--dim {
  fill: #505050;
}

.num--green {
  fill: #0f0;
}

.note {
  font: 11px 'Noto Sans CJK SC', sans-serif;
  fill: #fff;
}

.dialog__status {
  display: flex;
  gap: 2px;
  height: 20px;
}

.dialog__status div {
  display: flex;
  align-items: center;
  justify-content: space-between;
  width: 147px;
  padding-left: 8px;
  background: linear-gradient(#fdfdfd, var(--face));
  border: 1px solid var(--line);
}

.dialog__status div:last-child {
  flex: 1;
  margin-right: 2px;
  padding-left: 2px;
}

.sizer {
  align-self: flex-end;
  width: 12px;
  height: 12px;
}

/* status bar */
.status {
  display: flex;
  gap: 2px;
  height: 21px;
}

.status div {
  padding-left: 1px;
  line-height: 18px;
  background: linear-gradient(#fff, #f1f1f1);
  border: 1px solid var(--line);
}

.status .status__blank {
  width: 148px;
}

.status .status__height {
  width: 78px;
}

.status .status__base {
  width: 98px;
}

.status .status__count {
  width: 48px;
}

.status .status__msg {
  flex: 1;
}

.status .status__fps {
  width: 71px;
}

/* taskbar */
.taskbar {
  display: flex;
  align-items: center;
  height: 40px;
  color: #fff;
  background: #020b0e;
}

.taskbar__start {
  display: flex;
  align-items: center;
  justify-content: center;
  align-self: stretch;
  width: 48px;
  background: #000;
}

.taskbar__start svg {
  width: 16px;
  height: 16px;
}

.taskbar__search {
  display: flex;
  align-items: center;
  align-self: stretch;
  gap: 6px;
  width: 344px;
  margin-right: 2px;
  padding: 0 12px 0 9px;
  background: #333;
}

.taskbar__ring {
  width: 21px;
  height: 21px;
  border: 3px solid #fff;
  border-radius: 50%;
}

.taskbar__search input {
  flex: 1;
  min-width: 0;
  font-size: 14px;
}

.taskbar__search input::placeholder {
  color: #a0a0a0;
}

.taskbar__search svg {
  width: 16px;
  height: 20px;
}

.taskbar__app {
  display: flex;
  align-items: center;
  justify-content: center;
  align-self: stretch;
  width: 48px;
  margin-right: 1px;
  border-top: 2px solid transparent;
  border-bottom: 2px solid transparent;
}

.taskbar__app svg {
  width: 24px;
  height: 24px;
}

.taskbar__app.running {
  width: 40px;
  margin: 0 5px 0 4px;
  border-bottom-color: #76b9ed;
}

.taskbar__app.active {
  background: #344044;
  border-bottom-color: #76b9ed;
}

.taskbar__app.alert {
  background: #9c5a20;
  border-bottom-color: #ff7800;
}

.taskbar__cpu,
.taskbar__clock {
  display: flex;
  flex-direction: column;
  align-items: center;
  gap: 1px;
}

.taskbar__cpu {
  margin-left: auto;
}

.taskbar__tray {
  display: flex;
  align-items: center;
  gap: 9px;
  margin: 0 18px 0 17px;
}

.taskbar__tray svg {
  width: 16px;
  height: 16px;
}

.taskbar__tray .wide {
  width: 24px;
}

.taskbar__tray span {
  font-size: 13px;
}

.taskbar__notice {
  width: 26px;
  height: 26px;
  margin: 0 17px 0 19px;
}

/* floating widgets */
.ime {
  position: absolute;
  top: 24px;
  left: 710px;
  display: flex;
  align-items: center;
  gap: 4px;
  width: 173px;
  height: 24px;
  padding-left: 20px;
  font-size: 16px;
  font-weight: 700;
  color: #1d6cc0;
  background: #fafcff;
  border: 1px solid #a9c4e0;
}

.ime svg {
  width: 18px;
  height: 18px;
}

.ime .ime__logo {
  position: absolute;
  top: -4px;
  left: -13px;
  width: 28px;
  height: 28px;
}

.ball {
  position: absolute;
  top: -28px;
  left: 1114px;
  width: 46px;
  height: 46px;
  padding-top: 26px;
  font-size: 11px;
  font-weight: 700;
  color: #fff;
  text-align: center;
  background: #3cc465;
  border: 2px solid #d8d8d8;
  border-radius: 50%;
  box-shadow: 0 1px 3px rgba(0, 0, 0, 0.4);
}
</style>
